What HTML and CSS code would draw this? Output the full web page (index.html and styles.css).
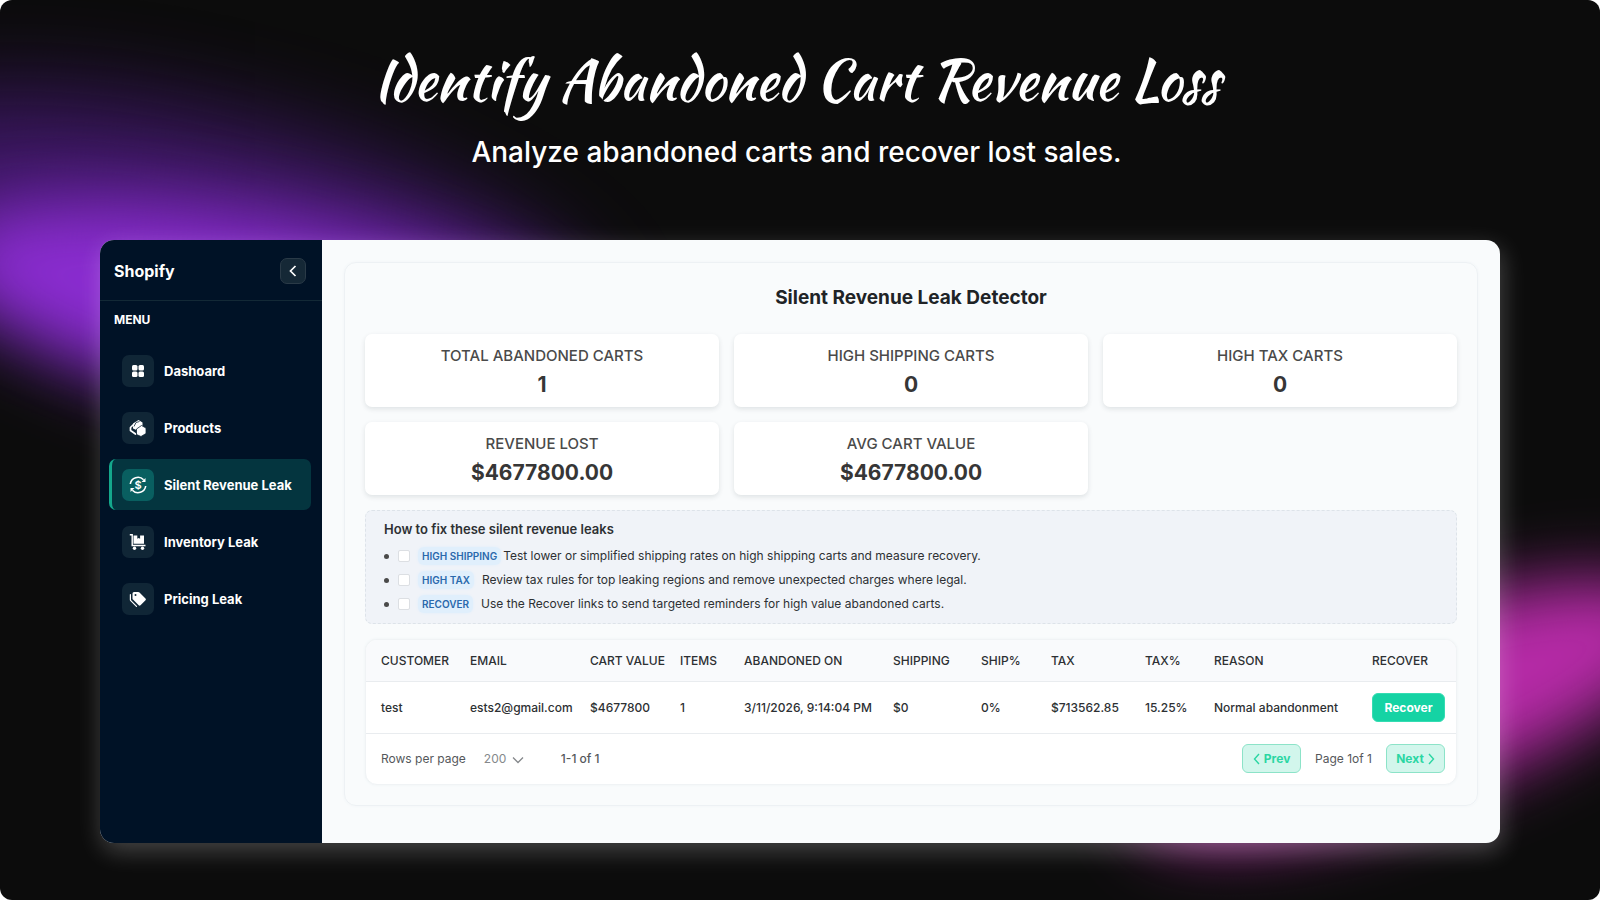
FILE: index.html
```html
<!DOCTYPE html>
<html lang="en">
<head>
    <meta charset="UTF-8">
    <meta name="viewport" content="width=device-width, initial-scale=1.0">
    <title>Silent Revenue Leak Detector</title>
    <link rel="stylesheet" href="styles.css">
</head>
<body>
    <div class="stage">
        <div class="glow glow-haze"></div>
        <div class="glow glow-purple"></div>
        <div class="glow glow-pink"></div>

        <header class="hero">
            <h1>Identify Abandoned Cart Revenue Loss</h1>
            <p>Analyze abandoned carts and recover lost sales.</p>
        </header>

        <div class="app">
            <aside class="sidebar">
                <div class="sidebar-head">
                    <span class="brand">Shopify</span>
                    <button class="collapse" type="button" aria-label="Collapse menu">
                        <svg width="8" height="12" viewBox="0 0 8 12"><path d="M6.5 1 1.5 6l5 5" fill="none" stroke="currentColor" stroke-width="1.7"/></svg>
                    </button>
                </div>
                <div class="menu-label">MENU</div>
                <nav class="menu">
                    <a class="menu-item" href="#">
                        <span class="menu-icon">
                            <svg width="18" height="18" viewBox="0 0 18 18" fill="currentColor">
                                <rect x="3" y="3" width="5.5" height="5.5" rx="1.5"/>
                                <rect x="9.5" y="3" width="5.5" height="5.5" rx="1.5"/>
                                <rect x="3" y="9.5" width="5.5" height="5.5" rx="1.5"/>
                                <rect x="9.5" y="9.5" width="5.5" height="5.5" rx="1.5"/>
                            </svg>
                        </span>
                        Dashoard
                    </a>
                    <a class="menu-item" href="#">
                        <span class="menu-icon">
                            <svg width="18" height="18" viewBox="0 0 18 18">
                                <path d="M4 6 1.5 8.5v3L6.5 15" fill="none" stroke="currentColor" stroke-width="1.7" stroke-linejoin="round" stroke-linecap="round"/>
                                <path d="M4 4.5 9.500 1 13.500 3.500V8L8.500 11.500 4 9.500z" fill="currentColor"/>
                                <path d="M7.500 10 12.500 6.500 17 9v5.500l-5 3-4.500-2z" fill="currentColor" stroke="#102636" stroke-width=".8" stroke-linejoin="round"/>
                                <path d="M5 7.500l2-4 3.500-1" fill="none" stroke="#102636" stroke-width=".8"/>
                            </svg>
                        </span>
                        Products
                    </a>
                    <a class="menu-item active" href="#">
                        <span class="menu-icon">
                            <svg width="18" height="18" viewBox="0 0 18 18">
                                <g fill="none" stroke="currentColor" stroke-width="1.6">
                                    <path d="M1.3 8A7.7 7.7 0 0 1 14.6 3.8"/>
                                    <path d="M16.7 10A7.7 7.7 0 0 1 3.4 14.2"/>
                                </g>
                                <path d="M16.5 2v4h-4zM1.5 16v-4h4z" fill="currentColor"/>
                                <text x="9" y="13" text-anchor="middle" fill="currentColor">$</text>
                            </svg>
                        </span>
                        Silent Revenue Leak
                    </a>
                    <a class="menu-item" href="#">
                        <span class="menu-icon">
                            <svg width="18" height="18" viewBox="0 0 18 18">
                                <path d="M.8 1.8h2.4v10.7h13.3" fill="none" stroke="currentColor" stroke-width="1.4"/>
                                <path d="M4.5 2.5h3.8v3.3l1.4-.8 1.4.8V2.5H15v8.3H4.5z" fill="currentColor"/>
                                <circle cx="5.5" cy="15.3" r="1.7" fill="currentColor"/>
                                <circle cx="13.5" cy="15.3" r="1.7" fill="currentColor"/>
                            </svg>
                        </span>
                        Inventory Leak
                    </a>
                    <a class="menu-item" href="#">
                        <span class="menu-icon">
                            <svg width="18" height="18" viewBox="0 0 18 18">
                                <path d="M3.500 3.500Q3.500 2 5 2h4.200q.8 0 1.300.5l6 6q.9.900 0 1.800l-5 5q-.9.900-1.800 0l-5.700-5.700q-.5-.5-.5-1.200z" fill="currentColor"/>
                                <path d="M1.400 4.500v5.200q0 .6.400 1l5.700 5.700" fill="none" stroke="currentColor" stroke-width="1.2" stroke-linecap="round"/>
                                <circle cx="6.500" cy="5" r="1" fill="#102636"/>
                            </svg>
                        </span>
                        Pricing Leak
                    </a>
                </nav>
            </aside>

            <main class="content">
                <section class="panel">
                    <h2>Silent Revenue Leak Detector</h2>

                    <div class="stats">
                        <div class="stat"><span>TOTAL ABANDONED CARTS</span><strong>1</strong></div>
                        <div class="stat"><span>HIGH SHIPPING CARTS</span><strong>0</strong></div>
                        <div class="stat"><span>HIGH TAX CARTS</span><strong>0</strong></div>
                        <div class="stat"><span>REVENUE LOST</span><strong>$4677800.00</strong></div>
                        <div class="stat"><span>AVG CART VALUE</span><strong>$4677800.00</strong></div>
                    </div>

                    <div class="fixes">
                        <h3>How to fix these silent revenue leaks</h3>
                        <ul>
                            <li>
                                <input type="checkbox" id="fix-shipping">
                                <label for="fix-shipping"><span class="tag">HIGH SHIPPING</span>Test lower or simplified shipping rates on high shipping carts and measure recovery.</label>
                            </li>
                            <li>
                                <input type="checkbox" id="fix-tax">
                                <label for="fix-tax"><span class="tag tag-short">HIGH TAX</span>Review tax rules for top leaking regions and remove unexpected charges where legal.</label>
                            </li>
                            <li>
                                <input type="checkbox" id="fix-recover">
                                <label for="fix-recover"><span class="tag tag-short">RECOVER</span>Use the Recover links to send targeted reminders for high value abandoned carts.</label>
                            </li>
                        </ul>
                    </div>

                    <div class="carts">
                        <table>
                            <thead>
                                <tr>
                                    <th class="col-customer">CUSTOMER</th>
                                    <th class="col-email">EMAIL</th>
                                    <th class="col-value">CART VALUE</th>
                                    <th class="col-items">ITEMS</th>
                                    <th class="col-date">ABANDONED ON</th>
                                    <th class="col-shipping">SHIPPING</th>
                                    <th class="col-ship">SHIP%</th>
                                    <th class="col-tax">TAX</th>
                                    <th class="col-taxp">TAX%</th>
                                    <th class="col-reason">REASON</th>
                                    <th class="col-recover">RECOVER</th>
                                </tr>
                            </thead>
                            <tbody>
                                <tr>
                                    <td>test</td>
                                    <td>ests2@gmail.com</td>
                                    <td>$4677800</td>
                                    <td>1</td>
                                    <td>3/11/2026, 9:14:04 PM</td>
                                    <td>$0</td>
                                    <td>0%</td>
                                    <td>$713562.85</td>
                                    <td>15.25%</td>
                                    <td>Normal abandonment</td>
                                    <td><button class="btn btn-recover" type="button">Recover</button></td>
                                </tr>
                            </tbody>
                        </table>
                        <div class="pager">
                            <label for="rows">Rows per page</label>
                            <span class="select">
                                <select id="rows"><option>200</option></select>
                                <svg width="12" height="8" viewBox="0 0 12 8"><path d="M1 1.5 6 6.5l5-5" fill="none" stroke="currentColor" stroke-width="1.3"/></svg>
                            </span>
                            <span class="range">1-1 of 1</span>
                            <button class="btn btn-page" type="button">
                                <svg width="7" height="12" viewBox="0 0 7 12"><path d="M6 1 1.5 6 6 11" fill="none" stroke="currentColor" stroke-width="1.4"/></svg>
                                Prev
                            </button>
                            <span class="page">Page 1of 1</span>
                            <button class="btn btn-page" type="button">
                                Next
                                <svg width="7" height="12" viewBox="0 0 7 12"><path d="M1 1l4.5 5L1 11" fill="none" stroke="currentColor" stroke-width="1.4"/></svg>
                            </button>
                        </div>
                    </div>
                </section>
            </main>
        </div>
    </div>
</body>
</html>
```
FILE: styles.css
```css
* {
    box-sizing: border-box;
}
body {
    margin: 0;
    background: #fff;
    font-family: Inter, "Liberation Sans", sans-serif;
    font-size: 12px;
    color: #2d3033;
}
h1, h2, h3, p, ul {
    margin: 0;
    padding: 0;
}
button, select {
    font-family: inherit;
}
svg {
    display: block;
}

/* dark backdrop with coloured glows */
.stage {
    position: relative;
    overflow: hidden;
    min-height: 100vh;
    padding: 38px 100px 56px;
    border-radius: 12px;
    background: #0c0c0c;
}
.glow {
    position: absolute;
    border-radius: 50%;
}
.glow-haze {
    left: -160px;
    top: 120px;
    width: 760px;
    height: 240px;
    background: #4f1b85;
    opacity: 0.7;
    filter: blur(46px);
    transform: rotate(14deg);
}
.glow-purple {
    left: -70px;
    top: 225px;
    width: 740px;
    height: 200px;
    background: #8a2cd0;
    filter: blur(36px);
    transform: rotate(12deg);
}
.glow-pink {
    right: -100px;
    top: 620px;
    width: 580px;
    height: 180px;
    background: #b52aa6;
    filter: blur(34px);
    transform: rotate(-20deg);
}
.hero {
    position: relative;
    padding-right: 7px;
    color: #fff;
    text-align: center;
}
.hero h1 {
    font-family: "Kaushan Script", Lato, sans-serif;
    font-size: 56px;
    font-weight: 400;
    line-height: 84px;
}
.hero p {
    font-size: 28px;
    font-weight: 500;
    line-height: 60px;
}

.app {
    position: relative;
    display: flex;
    margin-top: 58px;
    overflow: hidden;
    border-radius: 14px;
    background: #f9fbfc;
    box-shadow: 2px 8px 24px rgba(255, 255, 255, 0.24);
}

/* sidebar */
.sidebar {
    flex: none;
    width: 222px;
    background: #001226;
    color: #fff;
}
.sidebar-head {
    display: flex;
    align-items: center;
    justify-content: space-between;
    height: 61px;
    padding: 2px 16px 0 14px;
    border-bottom: 1px solid #132936;
}
.brand {
    font-size: 16px;
    font-weight: 700;
}
.collapse {
    display: flex;
    align-items: center;
    justify-content: center;
    width: 26px;
    height: 26px;
    padding: 0;
    border: 1px solid #2a3a47;
    border-radius: 7px;
    background: #152836;
    color: #fff;
}
.menu-label {
    padding: 10px 14px 16px;
    font-size: 12px;
    font-weight: 700;
    line-height: 18px;
}
.menu {
    display: flex;
    flex-direction: column;
    gap: 6px;
    padding: 0 11px 0 9px;
}
.menu-item {
    display: flex;
    align-items: center;
    gap: 10px;
    height: 51px;
    padding-left: 10px;
    border-left: 3px solid transparent;
    border-radius: 7px;
    color: #fff;
    font-size: 13px;
    font-weight: 700;
    line-height: 16px;
    text-decoration: none;
}
.menu-item.active {
    border-left-color: #14a88c;
    background: #04353f;
}
.menu-icon {
    display: flex;
    align-items: center;
    justify-content: center;
    width: 32px;
    height: 32px;
    border-radius: 7px;
    background: #102636;
}
.menu-icon text {
    font-size: 11px;
    font-weight: 600;
}
.active .menu-icon {
    background: #095f60;
}

/* main panel */
.content {
    flex: 1;
    min-width: 0;
    padding: 22px 22px 37px;
}
.panel {
    padding: 20px;
    border: 1px solid #edf1f4;
    border-radius: 12px;
    box-shadow: 0 0 3px #f0f4f6;
}
.panel h2 {
    font-size: 19px;
    font-weight: 700;
    line-height: 30px;
    text-align: center;
    color: #202326;
}
.stats {
    display: grid;
    grid-template-columns: repeat(3, 1fr);
    gap: 15px;
    margin-top: 21px;
}
.stat {
    display: flex;
    flex-direction: column;
    align-items: center;
    padding: 9px 12px 7px;
    border-radius: 7px;
    background: #fff;
    box-shadow: 0 2px 5px rgba(30, 50, 60, 0.12);
}
.stat span {
    font-size: 15px;
    font-weight: 500;
    line-height: 26px;
    color: #4a4a4a;
}
.stat strong {
    font-size: 21px;
    font-weight: 700;
    line-height: 31px;
    color: #363636;
}

.fixes {
    margin-top: 15px;
    padding: 8px 18px 7px;
    border: 1px dashed #dde3e9;
    border-radius: 7px;
    background: #f0f3f8;
}
.fixes h3 {
    font-size: 13px;
    font-weight: 600;
    line-height: 20px;
    padding-bottom: 5px;
}
.fixes ul {
    list-style: none;
}
.fixes li {
    display: flex;
    align-items: center;
    height: 24px;
}
.fixes li::before {
    content: "";
    width: 5px;
    height: 5px;
    margin-right: 9px;
    border-radius: 50%;
    background: #4a4a4a;
}
.fixes input {
    appearance: none;
    width: 12px;
    height: 12px;
    margin: 0 8px 0 0;
    border: 1px solid #dcdfe3;
    border-radius: 2px;
    background: #fff;
}
.tag {
    display: inline-block;
    margin-right: 2px;
    padding: 0 4px;
    border-radius: 6px;
    background: #e0effc;
    box-shadow: 0 0 3px #e0effc;
    color: #2a69ac;
    font-size: 10px;
    font-weight: 600;
    line-height: 18px;
}
.tag-short {
    margin-right: 8px;
}

.carts {
    margin-top: 15px;
    overflow: hidden;
    border: 1px solid #f0f3f5;
    border-radius: 12px;
    background: #fff;
    box-shadow: 0 0 3px #edf2f4;
}
table {
    width: 100%;
    table-layout: fixed;
    border-collapse: collapse;
}
th, td {
    padding: 0 0 0 15px;
    border-bottom: 1px solid #e9ecef;
    font-weight: 500;
    text-align: left;
    white-space: nowrap;
}
th {
    height: 41px;
    background: #f9fafc;
}
td {
    height: 52px;
}
.col-customer { width: 89px; }
.col-email { width: 120px; }
.col-value { width: 90px; }
.col-items { width: 64px; }
.col-date { width: 149px; }
.col-shipping { width: 88px; }
.col-ship { width: 70px; }
.col-tax { width: 94px; }
.col-taxp { width: 69px; }
.col-reason { width: 158px; }
.col-recover { width: 99px; }

.btn {
    height: 29px;
    border-radius: 6px;
    font-size: 12px;
    font-weight: 700;
}
.btn-recover {
    width: 73px;
    border: 1px solid #35dcb2;
    background: #15d3a4;
    color: #fff;
}
.btn-page {
    display: flex;
    align-items: center;
    justify-content: center;
    gap: 4px;
    width: 59px;
    padding: 0;
    border: 1px solid #8ce3c8;
    background: #d2f6ec;
    color: #2bd6a3;
}
.pager {
    display: flex;
    align-items: center;
    height: 50px;
    padding: 0 11px 0 15px;
    color: #55585b;
}
.select {
    position: relative;
    margin-left: 18px;
    color: #85888b;
}
.select select {
    appearance: none;
    width: 41px;
    padding: 0;
    border: 0;
    background: none;
    color: inherit;
    font-size: 12px;
}
.select svg {
    position: absolute;
    right: 1px;
    top: 5px;
    pointer-events: none;
}
.range {
    margin-left: 36px;
    margin-right: auto;
    font-weight: 500;
}
.page {
    margin: 0 14px;
}
```
